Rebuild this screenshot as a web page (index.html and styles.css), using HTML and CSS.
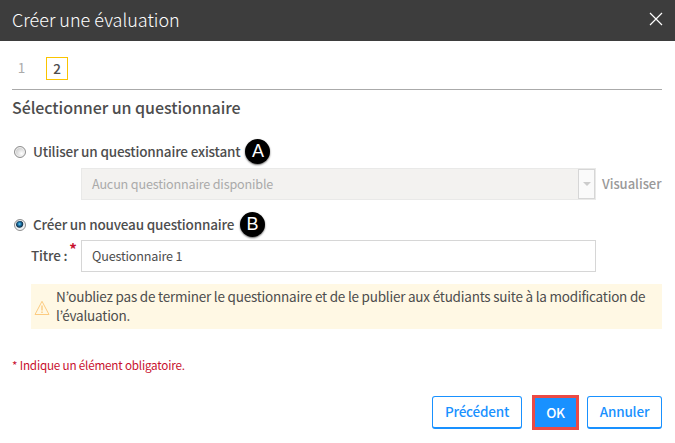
FILE: index.html
```html
<!DOCTYPE html>
<html lang="fr">
<head>
  <meta charset="UTF-8">
  <meta name="viewport" content="width=device-width, initial-scale=1.0">
  <title>Créer une évaluation</title>
  <link rel="stylesheet" href="styles.css">
</head>
<body>
  <!-- Header -->
  <header class="dialog-header">
    <h1>Créer une évaluation</h1>
    <button class="close-btn" aria-label="Fermer">
      <svg width="14" height="14" viewBox="0 0 14 14"><path d="M1 1L13 13M13 1L1 13" stroke="#fff" stroke-width="1.2" fill="none"/></svg>
    </button>
  </header>

  <main class="dialog-body">
    <!-- Steps -->
    <nav class="steps">
      <span class="step">1</span>
      <span class="step active">2</span>
    </nav>

    <h2>Sélectionner un questionnaire</h2>

    <!-- Existing questionnaire -->
    <div class="choice">
      <span class="radio"></span>
      <span class="choice-label existing">Utiliser un questionnaire existant</span>
      <span class="marker">A</span>
    </div>
    <div class="select-row">
      <div class="select">
        <span class="select-text">Aucun questionnaire disponible</span>
        <span class="select-arrow"><svg width="8" height="4" viewBox="0 0 8 4"><path d="M0 0H8L4 4Z" fill="#ccc"/></svg></span>
      </div>
      <span class="preview">Visualiser</span>
    </div>

    <!-- New questionnaire -->
    <div class="choice new">
      <span class="radio checked"></span>
      <span class="choice-label">Créer un nouveau questionnaire</span>
      <span class="marker">B</span>
    </div>
    <div class="title-row">
      <label class="title-label" for="titre">Titre :<span class="star">*</span></label>
      <input class="title-input" id="titre" type="text" value="Questionnaire 1">
    </div>

    <div class="warning">
      <svg class="warning-icon" width="16" height="16" viewBox="0 0 16 16" fill="none" stroke="#fccb80">
        <path d="M8 1.3L15 14.5H1Z"/>
        <path d="M8 5.5V10.5M8 11.5V13" stroke-width="1.4"/>
      </svg>
      <p>N’oubliez pas de terminer le questionnaire et de le publier aux étudiants suite à la modification de l’évaluation.</p>
    </div>

    <p class="required">* Indique un élément obligatoire.</p>

    <!-- Actions -->
    <div class="actions">
      <button class="btn prev">Précédent</button>
      <button class="btn ok">OK</button>
      <button class="btn cancel">Annuler</button>
    </div>
  </main>
</body>
</html>
```
FILE: styles.css
```css
/* General Reset */
* {
  margin: 0;
  padding: 0;
  box-sizing: border-box;
}

body {
  font-family: "Noto Sans CJK KR", "Open Sans", sans-serif;
  font-size: 13.5px;
  line-height: 19px;
  background: #fff;
  color: #4d4d4d;
}

/* Header */
.dialog-header {
  display: flex;
  justify-content: space-between;
  align-items: center;
  height: 41px;
  padding: 0 12px;
  background: #3d3d3d;
  color: #fff;
}

.dialog-header h1 {
  font-size: 18px;
  font-weight: 300;
  line-height: 24px;
  padding-bottom: 4px;
}

.close-btn {
  display: flex;
  border: none;
  background: none;
  padding-bottom: 3px;
}

.dialog-body {
  padding: 0 13px 0 12px;
}

/* Steps */
.steps {
  display: flex;
  gap: 13px;
  height: 49px;
  padding-top: 16px;
  border-bottom: 1px solid #aaa;
}

.step {
  width: 21px;
  height: 23px;
  padding-right: 2px;
  line-height: 20px;
  text-align: center;
  color: #aaa;
}

.step.active {
  width: 22px;
  padding: 0;
  border: 1px solid #fac400;
  font-weight: 500;
  color: #4d4d4d;
}

h2 {
  font-size: 16px;
  font-weight: 500;
  line-height: 22px;
  letter-spacing: -0.07px;
  margin: 6px 0 20px;
}

/* Radio rows */
.choice {
  display: flex;
  align-items: center;
  height: 28px;
  padding-left: 2px;
}

.choice.new {
  margin-top: 11px;
}

.choice-label {
  margin: 0 6px 2px 7px;
  font-weight: 500;
  letter-spacing: -0.18px;
}

.choice-label.existing {
  margin-right: 5px;
}

.radio {
  width: 12px;
  height: 12px;
  border: 1px solid #8f8f8f;
  border-radius: 50%;
  background: radial-gradient(circle at 65% 65%, #fff, #c8c8c8 75%);
  box-shadow: inset 0 0 0 1px #f3f3f3;
}

.radio.checked {
  background: radial-gradient(circle at 45% 40%, #6fd0f5 0, #1b75ab 20%, #11334d 40%, #e8eef2 52%);
}

.marker {
  width: 25px;
  height: 25px;
  margin-bottom: 2px;
  border-radius: 50%;
  background: #000;
  box-shadow: 0 1px 2px rgba(0, 0, 0, 0.6);
  color: #fff;
  font: 18px/25px "Liberation Sans", sans-serif;
  text-align: center;
}

/* Disabled select */
.select-row {
  display: flex;
  align-items: center;
  gap: 6px;
  padding-left: 69px;
  margin-top: 2px;
}

.select {
  display: flex;
  flex-shrink: 0;
  align-items: center;
  justify-content: space-between;
  width: 515px;
  height: 32px;
  border: 1px solid #e9e9e8;
  background: #f3f2f0;
}

.select-text {
  padding: 0 0 1px 10px;
  font-size: 12.6px;
  letter-spacing: -0.17px;
  color: #aaa;
}

.select-arrow {
  display: flex;
  align-items: center;
  justify-content: center;
  width: 17px;
  height: 30px;
  border: 1px solid #d6d6d6;
  background: #fafafa;
}

.preview {
  padding-bottom: 2px;
  font-weight: 500;
  font-size: 13px;
  letter-spacing: -0.03px;
  color: #999;
}

/* Title field */
.title-row {
  display: flex;
  margin-top: 1px;
  padding-left: 19px;
}

.title-label {
  display: flex;
  width: 50px;
  font-weight: 500;
  letter-spacing: -0.18px;
  line-height: 30px;
}

.star {
  margin-left: 2px;
  line-height: 17px;
  font-size: 15px;
  font-weight: 700;
  color: #c8102e;
}

.title-input {
  width: 515px;
  height: 32px;
  padding: 0 10px 1px;
  border: 1px solid #d6d6d6;
  background: #fff;
  font-family: inherit;
  font-size: 12.6px;
  letter-spacing: -0.17px;
  color: #4d4d4d;
}

/* Warning */
.warning {
  display: flex;
  align-items: center;
  gap: 6px;
  height: 45px;
  margin: 12px 0 0 19px;
  padding: 0 3px;
  background: #fff8e4;
}

.warning p {
  padding-bottom: 2px;
  letter-spacing: -0.22px;
}

.warning-icon {
  flex-shrink: 0;
  margin-top: 2px;
}

.required {
  margin-top: 26px;
  font-size: 11.7px;
  letter-spacing: -0.2px;
  color: #c8102e;
}

/* Actions */
.actions {
  display: flex;
  justify-content: flex-end;
  align-items: center;
  margin-top: 21px;
}

.btn {
  height: 33px;
  padding-bottom: 2px;
  border: 1px solid #1991ff;
  border-bottom-width: 2px;
  border-radius: 3px;
  background: #fff;
  color: #1991ff;
  font-family: inherit;
  font-size: 13.5px;
  font-weight: 500;
  letter-spacing: -0.2px;
}

.prev {
  width: 90px;
  margin-right: 10px;
}

.ok {
  width: 47px;
  height: 35px;
  margin-right: 8px;
  border: 3px solid #eb4a45;
  border-radius: 0;
  background: #1991ff;
  color: #fff;
}

.cancel {
  width: 75px;
}
```
